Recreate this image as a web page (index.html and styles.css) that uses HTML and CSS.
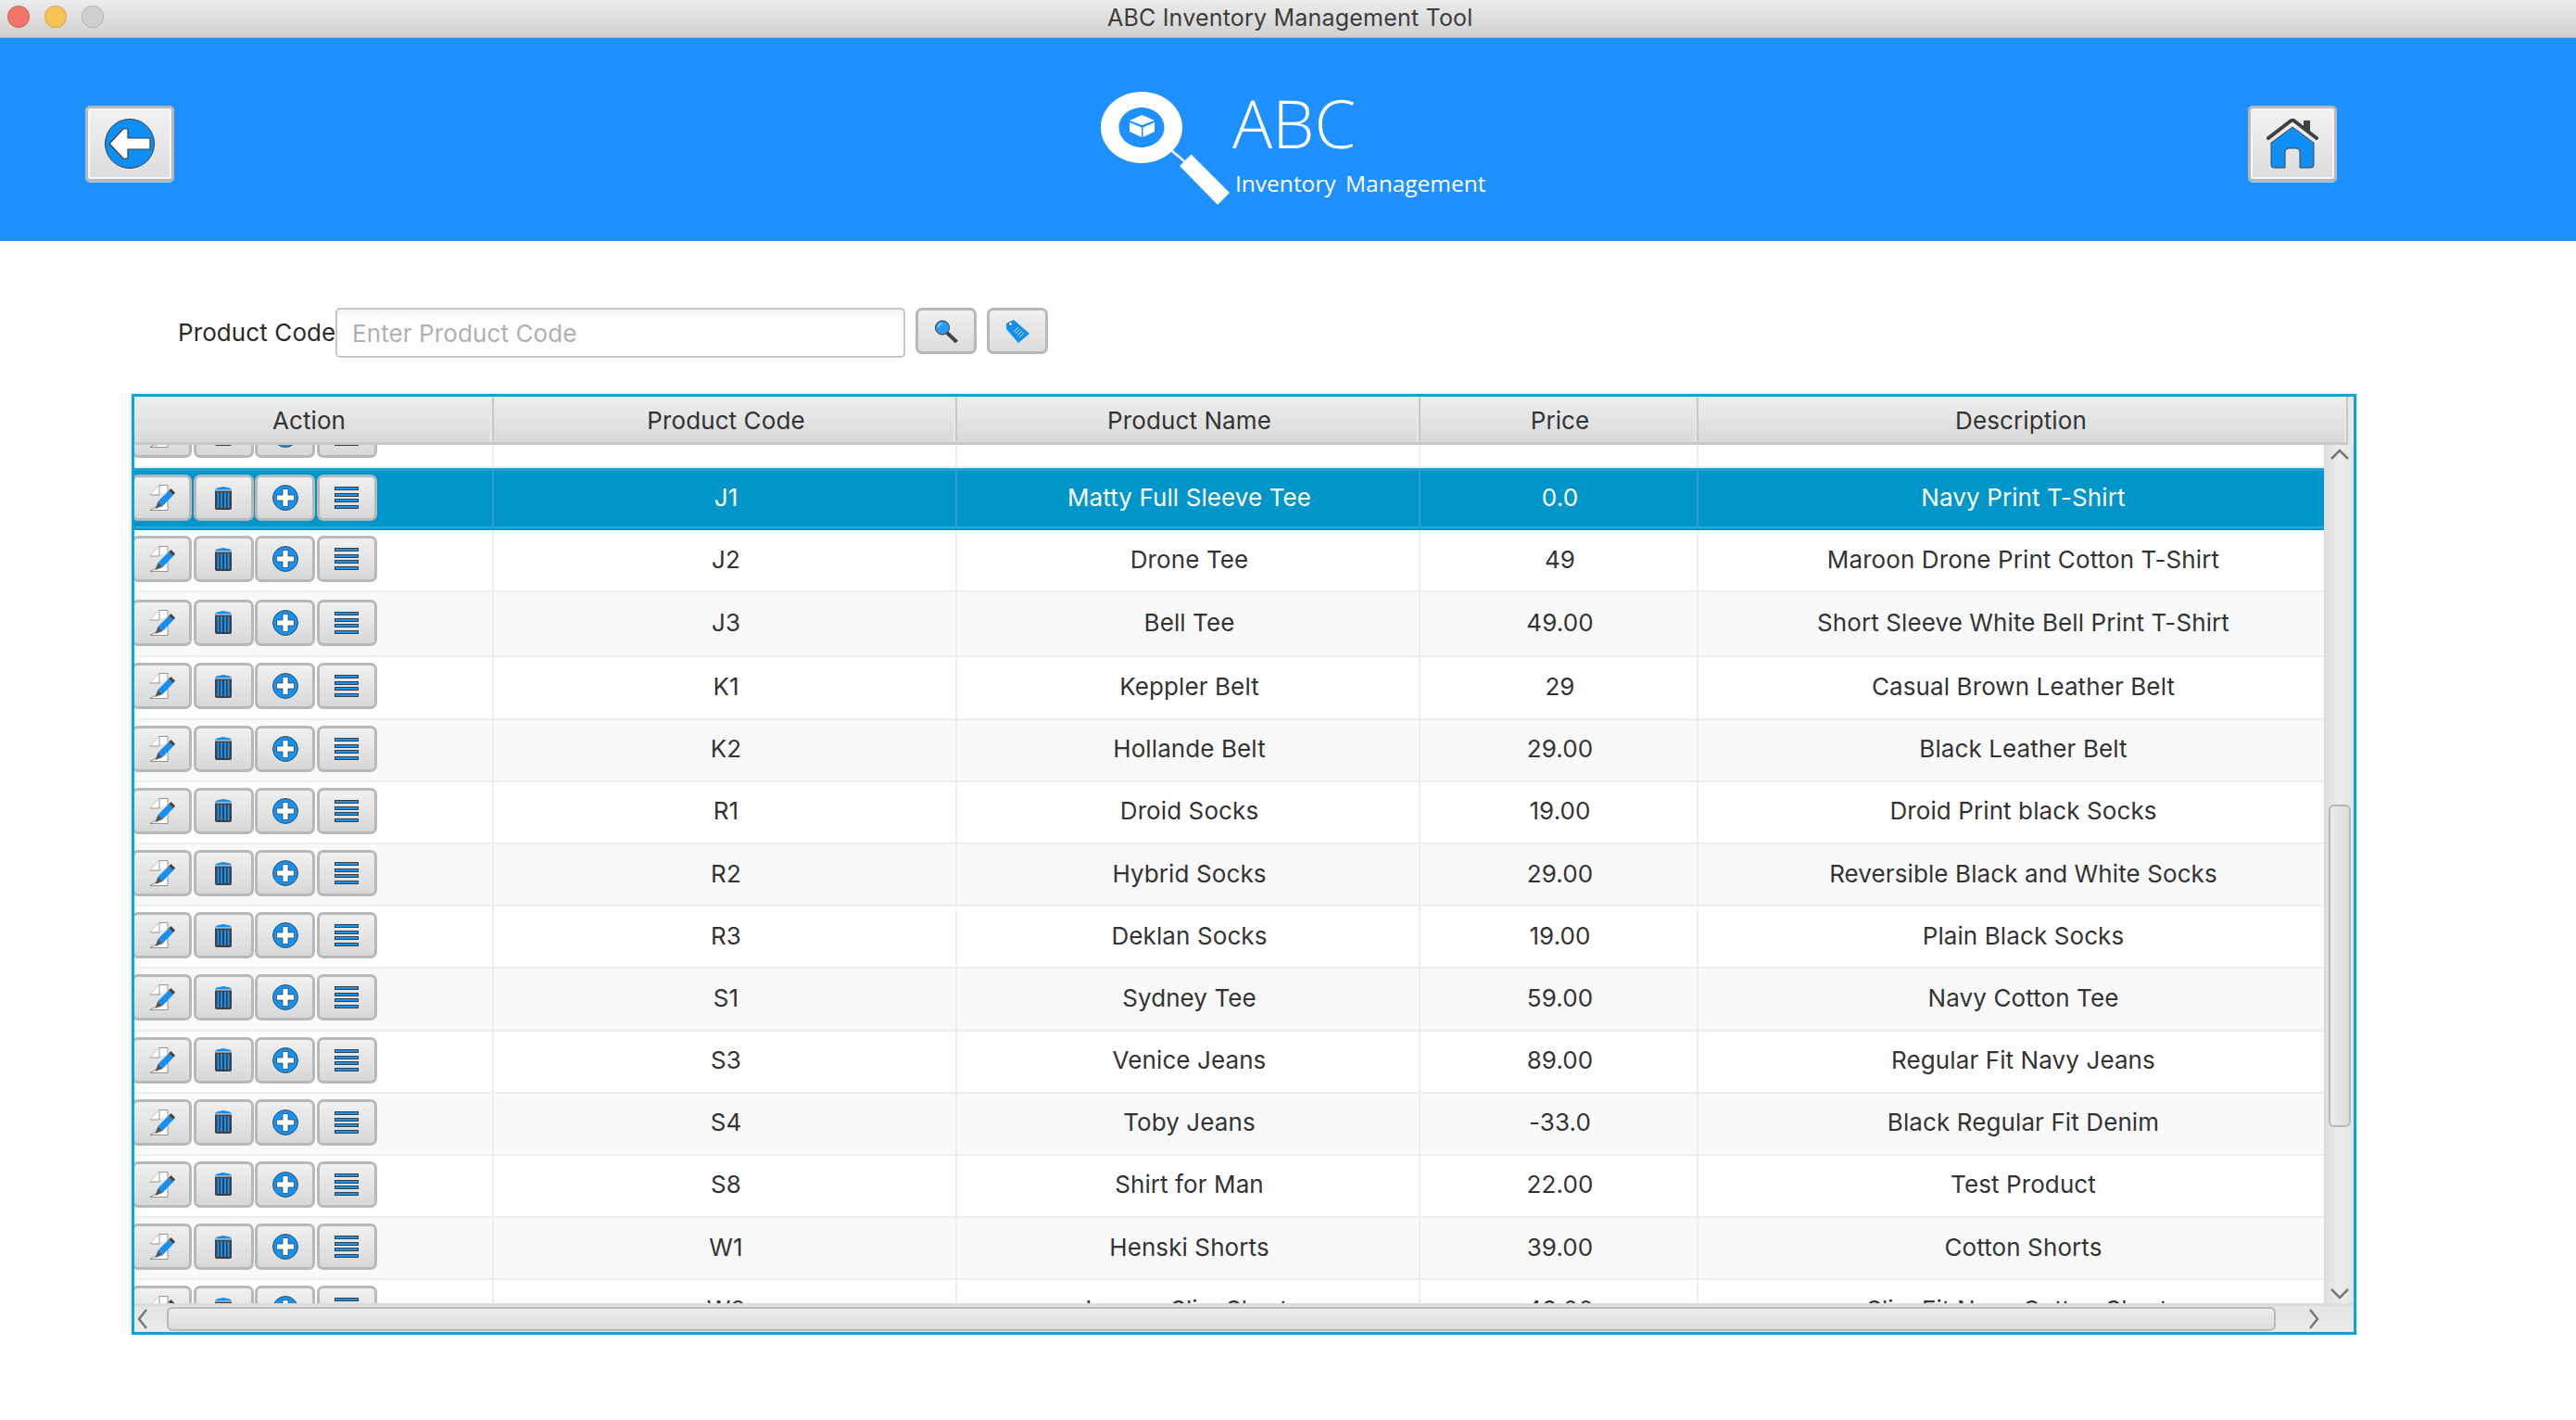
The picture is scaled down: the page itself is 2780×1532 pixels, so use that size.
FILE: index.html
```html
<!DOCTYPE html>
<html lang="en">
<head>
<meta charset="utf-8">
<title>ABC Inventory Management Tool</title>
<link rel="stylesheet" href="styles.css">
</head>
<body>
<svg class="defs" width="0" height="0" aria-hidden="true">
  <symbol id="i-edit" viewBox="0 0 28 28">
    <path d="M1 11 L11 .5 H20 V8 M20 17 V27.500 H1 Z" fill="#fff" stroke="#555" stroke-width=".6"/>
    <path d="M1 11 L11 11 V.5" fill="#fff" stroke="#555" stroke-width=".6"/>
    <path d="M9.500 18 L21 6.500 L26 11 L14.500 23 Z" fill="#1590f2"/>
    <path d="M21 6.500 L23.500 4 L28 8.500 L26 11 Z" fill="#444"/>
    <path d="M9.500 18 L14.500 23 L6.500 26 Z" fill="#555"/>
  </symbol>
  <symbol id="i-trash" viewBox="0 0 18 25">
    <path d="M0 4.500 H18 V23 Q18 25 16 25 H2 Q0 25 0 23 Z" fill="#3d4046"/>
    <path d="M0 3 Q2 .8 6 .8 Q7 0 9 0 Q11 0 12 .8 Q16 .8 18 3 V3.500 H0 Z" fill="#1590f2"/>
    <path d="M2.500 6 H4.300 V23 H2.500 Z M6.100 6 H7.900 V23 H6.100 Z M10.100 6 H11.900 V23 H10.100 Z M13.700 6 H15.500 V23 H13.700 Z" fill="#1697fa"/>
  </symbol>
  <symbol id="i-add" viewBox="0 0 28 28">
    <circle cx="14" cy="14" r="13.500" fill="#1293f8" stroke="#30343a" stroke-width=".8"/>
    <path d="M11 4.500 H17 V11 H23.500 V17 H17 V23.500 H11 V17 H4.500 V11 H11 Z" fill="#fff" stroke="#333" stroke-width=".7"/>
  </symbol>
  <symbol id="i-list" viewBox="0 0 26 24">
    <path d="M0 0 H26 V4 H0 Z M0 7 H26 V11 H0 Z M0 13 H26 V17 H0 Z M0 20 H26 V24 H0 Z" fill="#3a3d42"/>
    <path d="M1 1 H25 V3 H1 Z M1 8 H25 V10 H1 Z M1 14 H25 V16 H1 Z M1 21 H25 V23 H1 Z" fill="#1296ff"/>
  </symbol>
</svg>

<div class="titlebar">
  <span class="light light-red"></span>
  <span class="light light-yellow"></span>
  <span class="light light-grey"></span>
  <span class="window-title">ABC Inventory Management Tool</span>
</div>

<header class="banner">
  <button class="navbtn" type="button" aria-label="Back">
    <svg width="54" height="54" viewBox="0 0 54 54">
      <circle cx="27" cy="27" r="26.500" fill="#0d8ff5" stroke="#3a3d42" stroke-width="1"/>
      <path d="M5 27 L20 11 H25 V21 H49 V33 H25 V43 H20 Z" fill="#fff" stroke="#3a3d42" stroke-width="1.200" stroke-linejoin="round"/>
    </svg>
  </button>
  <div class="brand">
    <svg class="brand-mark" width="140" height="124" viewBox="0 0 140 124">
      <path fill-rule="evenodd" fill="#fff" d="M44 1 C68.300 1 88 18.200 88 39.500 C88 60.800 68.300 78 44 78 C19.700 78 0 60.800 0 39.500 C0 18.200 19.700 1 44 1 Z M44 18 C30.500 18 19.500 27.600 19.500 39.500 C19.500 51.400 30.500 61 44 61 C57.500 61 68.500 51.400 68.500 39.500 C68.500 27.600 57.500 18 44 18 Z"/>
      <path d="M77 65 L90 76" stroke="#fff" stroke-width="2.500"/>
      <path d="M97 69 Q98 68 99 70 L139 110 L126 123 L86 82 Q85 81 86 80 Z" fill="#fff"/>
      <path d="M44.500 26 L58 32 L44.500 37 L31 32 Z M31 34 L44 39.500 V50 L31 44 Z M45.500 39.500 L58 34 V44 L45.500 50 Z" fill="#fff"/>
    </svg>
    <div class="brand-text">
      <div class="brand-name">ABC</div>
      <div class="brand-sub">Inventory Management</div>
    </div>
  </div>
  <button class="navbtn navbtn-home" type="button" aria-label="Home">
    <svg width="56" height="54" viewBox="0 0 56 54">
      <path d="M40 2 H47 V15 L40 10 Z" fill="#3f3f3f"/>
      <path d="M2 21 L26 2.500 Q28 1 30 2.500 L54 21" fill="none" stroke="#3f3f3f" stroke-width="4" stroke-linecap="round"/>
      <path d="M5 26 L28 9 L51 26 V50 Q51 53 48 53 H36 V36 Q36 32 32 32 H24 Q20 32 20 36 V53 H8 Q5 53 5 50 Z" fill="#0d8ff5" stroke="#444" stroke-width="1"/>
    </svg>
  </button>
</header>

<section class="search">
  <label class="search-label" for="code">Product Code</label>
  <input class="search-input" id="code" type="text" placeholder="Enter Product Code">
  <button class="toolbtn" type="button" aria-label="Search">
    <svg width="25" height="25" viewBox="0 0 25 25">
      <path d="M13 14 L23.500 24" stroke="#444" stroke-width="4"/>
      <circle cx="8" cy="8.500" r="7.500" fill="#2a9cf5" stroke="#30343a" stroke-width="1"/>
      <path d="M3.500 8.500 A4.500 4.500 0 0 1 8 4" stroke="#9ad2ff" stroke-width="1.500" fill="none"/>
    </svg>
  </button>
  <button class="toolbtn toolbtn-tag" type="button" aria-label="Tag">
    <svg width="25" height="25" viewBox="0 0 25 25">
      <path d="M0 4 L8 0 L25 15 L13 25 L0 10 Z" fill="#108ff5"/>
      <circle cx="4.500" cy="4.500" r="2" fill="#fff" stroke="#333" stroke-width=".7"/>
      <path d="M8 13 L13 8 M10 15 L15 10 M12 17 L17 12 M14 19 L19 14" stroke="#cfe8ff" stroke-width="1"/>
    </svg>
  </button>
</section>

<section class="table">
  <div class="thead">
    <div class="th">Action</div>
    <div class="th">Product Code</div>
    <div class="th">Product Name</div>
    <div class="th">Price</div>
    <div class="th th-last">Description</div>
    <div class="th-fill"></div>
  </div>
  <div class="tmiddle">
    <div class="tbody">
      <div class="rows">
        <div class="row"><div class="td td-action"><span class="ab"><svg class="ic-edit"><use href="#i-edit"/></svg></span><span class="ab"><svg class="ic-trash"><use href="#i-trash"/></svg></span><span class="ab"><svg class="ic-add"><use href="#i-add"/></svg></span><span class="ab"><svg class="ic-list"><use href="#i-list"/></svg></span></div><div class="td"></div><div class="td"></div><div class="td"></div><div class="td"></div></div>
        <div class="row row-sel"><div class="td td-action"><span class="ab"><svg class="ic-edit"><use href="#i-edit"/></svg></span><span class="ab"><svg class="ic-trash"><use href="#i-trash"/></svg></span><span class="ab"><svg class="ic-add"><use href="#i-add"/></svg></span><span class="ab"><svg class="ic-list"><use href="#i-list"/></svg></span></div><div class="td">J1</div><div class="td">Matty Full Sleeve Tee</div><div class="td">0.0</div><div class="td">Navy Print T-Shirt</div></div>
        <div class="row"><div class="td td-action"><span class="ab"><svg class="ic-edit"><use href="#i-edit"/></svg></span><span class="ab"><svg class="ic-trash"><use href="#i-trash"/></svg></span><span class="ab"><svg class="ic-add"><use href="#i-add"/></svg></span><span class="ab"><svg class="ic-list"><use href="#i-list"/></svg></span></div><div class="td">J2</div><div class="td">Drone Tee</div><div class="td">49</div><div class="td">Maroon Drone Print Cotton T-Shirt</div></div>
        <div class="row row-alt row-tall"><div class="td td-action"><span class="ab"><svg class="ic-edit"><use href="#i-edit"/></svg></span><span class="ab"><svg class="ic-trash"><use href="#i-trash"/></svg></span><span class="ab"><svg class="ic-add"><use href="#i-add"/></svg></span><span class="ab"><svg class="ic-list"><use href="#i-list"/></svg></span></div><div class="td">J3</div><div class="td">Bell Tee</div><div class="td">49.00</div><div class="td">Short Sleeve White Bell Print T-Shirt</div></div>
        <div class="row"><div class="td td-action"><span class="ab"><svg class="ic-edit"><use href="#i-edit"/></svg></span><span class="ab"><svg class="ic-trash"><use href="#i-trash"/></svg></span><span class="ab"><svg class="ic-add"><use href="#i-add"/></svg></span><span class="ab"><svg class="ic-list"><use href="#i-list"/></svg></span></div><div class="td">K1</div><div class="td">Keppler Belt</div><div class="td">29</div><div class="td">Casual Brown Leather Belt</div></div>
        <div class="row row-alt"><div class="td td-action"><span class="ab"><svg class="ic-edit"><use href="#i-edit"/></svg></span><span class="ab"><svg class="ic-trash"><use href="#i-trash"/></svg></span><span class="ab"><svg class="ic-add"><use href="#i-add"/></svg></span><span class="ab"><svg class="ic-list"><use href="#i-list"/></svg></span></div><div class="td">K2</div><div class="td">Hollande Belt</div><div class="td">29.00</div><div class="td">Black Leather Belt</div></div>
        <div class="row"><div class="td td-action"><span class="ab"><svg class="ic-edit"><use href="#i-edit"/></svg></span><span class="ab"><svg class="ic-trash"><use href="#i-trash"/></svg></span><span class="ab"><svg class="ic-add"><use href="#i-add"/></svg></span><span class="ab"><svg class="ic-list"><use href="#i-list"/></svg></span></div><div class="td">R1</div><div class="td">Droid Socks</div><div class="td">19.00</div><div class="td">Droid Print black Socks</div></div>
        <div class="row row-alt"><div class="td td-action"><span class="ab"><svg class="ic-edit"><use href="#i-edit"/></svg></span><span class="ab"><svg class="ic-trash"><use href="#i-trash"/></svg></span><span class="ab"><svg class="ic-add"><use href="#i-add"/></svg></span><span class="ab"><svg class="ic-list"><use href="#i-list"/></svg></span></div><div class="td">R2</div><div class="td">Hybrid Socks</div><div class="td">29.00</div><div class="td">Reversible Black and White Socks</div></div>
        <div class="row"><div class="td td-action"><span class="ab"><svg class="ic-edit"><use href="#i-edit"/></svg></span><span class="ab"><svg class="ic-trash"><use href="#i-trash"/></svg></span><span class="ab"><svg class="ic-add"><use href="#i-add"/></svg></span><span class="ab"><svg class="ic-list"><use href="#i-list"/></svg></span></div><div class="td">R3</div><div class="td">Deklan Socks</div><div class="td">19.00</div><div class="td">Plain Black Socks</div></div>
        <div class="row row-alt"><div class="td td-action"><span class="ab"><svg class="ic-edit"><use href="#i-edit"/></svg></span><span class="ab"><svg class="ic-trash"><use href="#i-trash"/></svg></span><span class="ab"><svg class="ic-add"><use href="#i-add"/></svg></span><span class="ab"><svg class="ic-list"><use href="#i-list"/></svg></span></div><div class="td">S1</div><div class="td">Sydney Tee</div><div class="td">59.00</div><div class="td">Navy Cotton Tee</div></div>
        <div class="row"><div class="td td-action"><span class="ab"><svg class="ic-edit"><use href="#i-edit"/></svg></span><span class="ab"><svg class="ic-trash"><use href="#i-trash"/></svg></span><span class="ab"><svg class="ic-add"><use href="#i-add"/></svg></span><span class="ab"><svg class="ic-list"><use href="#i-list"/></svg></span></div><div class="td">S3</div><div class="td">Venice Jeans</div><div class="td">89.00</div><div class="td">Regular Fit Navy Jeans</div></div>
        <div class="row row-alt"><div class="td td-action"><span class="ab"><svg class="ic-edit"><use href="#i-edit"/></svg></span><span class="ab"><svg class="ic-trash"><use href="#i-trash"/></svg></span><span class="ab"><svg class="ic-add"><use href="#i-add"/></svg></span><span class="ab"><svg class="ic-list"><use href="#i-list"/></svg></span></div><div class="td">S4</div><div class="td">Toby Jeans</div><div class="td">-33.0</div><div class="td">Black Regular Fit Denim</div></div>
        <div class="row"><div class="td td-action"><span class="ab"><svg class="ic-edit"><use href="#i-edit"/></svg></span><span class="ab"><svg class="ic-trash"><use href="#i-trash"/></svg></span><span class="ab"><svg class="ic-add"><use href="#i-add"/></svg></span><span class="ab"><svg class="ic-list"><use href="#i-list"/></svg></span></div><div class="td">S8</div><div class="td">Shirt for Man</div><div class="td">22.00</div><div class="td">Test Product</div></div>
        <div class="row row-alt"><div class="td td-action"><span class="ab"><svg class="ic-edit"><use href="#i-edit"/></svg></span><span class="ab"><svg class="ic-trash"><use href="#i-trash"/></svg></span><span class="ab"><svg class="ic-add"><use href="#i-add"/></svg></span><span class="ab"><svg class="ic-list"><use href="#i-list"/></svg></span></div><div class="td">W1</div><div class="td">Henski Shorts</div><div class="td">39.00</div><div class="td">Cotton Shorts</div></div>
        <div class="row"><div class="td td-action"><span class="ab"><svg class="ic-edit"><use href="#i-edit"/></svg></span><span class="ab"><svg class="ic-trash"><use href="#i-trash"/></svg></span><span class="ab"><svg class="ic-add"><use href="#i-add"/></svg></span><span class="ab"><svg class="ic-list"><use href="#i-list"/></svg></span></div><div class="td">W2</div><div class="td">Jeremy Slim Shorts</div><div class="td">49.00</div><div class="td">Slim Fit Navy Cotton Shorts</div></div>
      </div>
    </div>
    <div class="vbar">
      <svg class="chev" width="24" height="14" viewBox="0 0 24 14"><path d="M3 12 L12 3 L21 12" fill="none" stroke="#777" stroke-width="2.500"/></svg>
      <div class="vtrack"><div class="vthumb"></div></div>
      <svg class="chev" width="24" height="14" viewBox="0 0 24 14"><path d="M3 2 L12 11 L21 2" fill="none" stroke="#777" stroke-width="2.500"/></svg>
    </div>
  </div>
  <div class="hbar">
    <svg width="14" height="24" viewBox="0 0 14 24"><path d="M11 2 L3 12 L11 22" fill="none" stroke="#777" stroke-width="2.500"/></svg>
    <div class="hthumb"></div>
    <svg class="hbar-next" width="14" height="24" viewBox="0 0 14 24"><path d="M3 2 L11 12 L3 22" fill="none" stroke="#777" stroke-width="2.500"/></svg>
  </div>
</section>
</body>
</html>
```
FILE: styles.css
```css
* { box-sizing: border-box; }
html, body { margin: 0; padding: 0; }
body {
  width: 2780px;
  height: 1532px;
  overflow: hidden;
  background: #fff;
  font-family: Inter, "Liberation Sans", sans-serif;
  font-size: 26px;
  letter-spacing: .1px;
  color: #333;
}
.defs { display: block; height: 0; }

.titlebar {
  height: 41px;
  display: flex;
  align-items: center;
  gap: 16px;
  padding: 0 8px 3px;
  background: linear-gradient(#ececec, #d0d0d0);
  border-bottom: 1px solid #b4b4b4;
}
.light { width: 24px; height: 24px; margin-top: -1px; border-radius: 50%; border: 1px solid rgba(0,0,0,.14); }
.light-red { background: #f2736a; }
.light-yellow { background: #f7c353; }
.light-grey { background: #d0d0d0; }
.window-title { margin-left: 1067px; font-size: 25px; letter-spacing: .2px; color: #3c3c3c; }

.banner {
  height: 219px;
  background: #1e90ff;
  display: flex;
  align-items: flex-start;
  padding-left: 92px;
}
.navbtn {
  width: 96px;
  height: 82px;
  margin-top: 73px;
  display: flex;
  align-items: center;
  justify-content: center;
  padding: 0;
  border: 3px solid #b8b8b8;
  border-radius: 5px;
  background: linear-gradient(#f2f2f2, #dcdcdc);
  box-shadow: inset 0 0 0 2px #f6f6f6, 0 1px 0 #9cd0ff;
}
.navbtn-home { margin-left: 824px; }

.brand { display: flex; margin-left: 1000px; margin-top: 57px; width: 414px; flex: none; }
.brand-mark { flex: none; }
.brand-text { margin-left: 2px; white-space: nowrap; }
.brand-name { font-family: "Open Sans", sans-serif; font-weight: 300; font-size: 72px; line-height: 66px; letter-spacing: 0; color: #fff; margin-top: 1px; }
.brand-sub { font-family: "Open Sans", sans-serif; font-weight: 400; font-size: 24.500px; line-height: 34px; letter-spacing: 0; color: #fff; word-spacing: 4px; margin-left: 3px; margin-top: 16px; }

.search {
  display: flex;
  align-items: flex-start;
  margin-top: 72px;
  padding-left: 192px;
  height: 93px;
}
.search-label { width: 170px; line-height: 54px; color: #2a2a2a; white-space: nowrap; }
.search-input {
  width: 615px;
  height: 54px;
  padding: 0 16px;
  font: inherit;
  letter-spacing: inherit;
  border: 2px solid #c8c8c8;
  border-radius: 5px;
  background: linear-gradient(#f4f4f4, #fff 12px);
  color: #333;
}
.search-input::placeholder { color: #b0b0b0; opacity: 1; }
.toolbtn {
  width: 66px;
  height: 50px;
  margin-left: 11px;
  display: flex;
  align-items: center;
  justify-content: center;
  padding: 0;
  border: 3px solid #b8b8b8;
  border-radius: 7px;
  background: linear-gradient(#f0f0f0, #dcdcdc);
}

.table {
  margin-left: 142px;
  width: 2401px;
  height: 1015px;
  border: 3px solid #0ea2dc;
  box-shadow: 0 0 3px rgba(14,162,220,.35);
  display: flex;
  flex-direction: column;
  overflow: hidden;
}
.thead { height: 52px; flex: none; display: flex; margin-left: -10px; background: #e8e8e8; }
.th {
  width: 500px;
  display: flex;
  align-items: center;
  justify-content: center;
  background: linear-gradient(#eeeeee, #d9d9d9);
  border-right: 2px solid #c8c8c8;
  border-bottom: 3px solid #c8c8c8;
  box-shadow: inset 0 2px 0 #f6f6f6, inset -2px 0 0 #e8e8e8;
  color: #333;
  padding: 2px 0 0 3px;
}
.th:nth-child(1) { width: 398px; padding-left: 1px; }
.th:nth-child(4) { width: 300px; }
.th:nth-child(5) { width: 701px; padding: 2px 3px 0 0; }
.th-fill { flex: 1; background: #e9e9e9; }

.tmiddle { flex: 1; min-height: 0; display: flex; }
.tbody { flex: 1; min-width: 0; overflow: hidden; }
.rows { margin-top: -42.200px; margin-left: -10px; width: 2400px; }
.row { height: 67.200px; display: flex; background: #fff; border-bottom: 2px solid #eeeeee; }
.row-alt { background: #f9f9f9; }
.row-tall { height: 70px; }
.row-sel {
  background: #0096c9;
  color: #fff;
  border-top: 3px solid #18a4d7;
  border-bottom-color: #0096c9;
  box-shadow: inset 0 -2px 0 #2aa9d6;
}
.td {
  width: 500px;
  display: flex;
  align-items: center;
  justify-content: center;
  padding: 0 0 3px 3px;
  border-right: 2px solid #eeeeee;
  white-space: nowrap;
  color: #333;
}
.row-sel .td { color: #fff; border-right-color: #28a5d2; padding-bottom: 6px; }
.td:nth-child(1) { width: 398px; }
.td:nth-child(4) { width: 300px; }
.td:nth-child(5) { width: 701px; border-right: 0; padding-left: 0; }
.td-action { justify-content: flex-start; gap: 1.500px; padding-left: 7px; }
.row-sel .td-action { padding-bottom: 4px; }

.ab {
  width: 65px;
  height: 50px;
  flex: none;
  display: flex;
  align-items: center;
  justify-content: center;
  border: 3px solid #b8b8b8;
  border-radius: 7px;
  background: linear-gradient(#f0f0f0, #d8d8d8);
}
.ic-edit { width: 28px; height: 28px; }
.ic-trash { width: 18px; height: 25px; }
.ic-add { width: 28px; height: 28px; }
.ic-list { width: 26px; height: 24px; }

.vbar {
  width: 32px;
  flex: none;
  display: flex;
  flex-direction: column;
  align-items: center;
  background: linear-gradient(90deg, #e0e0e0, #ececec 50%, #e4e4e4);
  border-left: 2px solid #dcdcdc;
  padding: 3px 0 3px;
}
.vtrack { flex: 1; width: 100%; padding-top: 371px; display: flex; justify-content: center; }
.vthumb {
  width: 24px;
  height: 348px;
  border: 2px solid #b8b8b8;
  border-radius: 6px;
  background: linear-gradient(90deg, #ececec, #dcdcdc);
}

.hbar {
  height: 31px;
  flex: none;
  display: flex;
  align-items: center;
  padding-left: 2px;
  border-top: 3px solid #dcdcdc;
  background: linear-gradient(#e4e4e4, #ececec);
}
.hthumb {
  width: 2276px;
  height: 26px;
  margin-left: 19px;
  border: 2px solid #b8b8b8;
  border-radius: 6px;
  background: linear-gradient(#ececec, #dcdcdc);
}
.hbar-next { margin-left: 34px; }
```
